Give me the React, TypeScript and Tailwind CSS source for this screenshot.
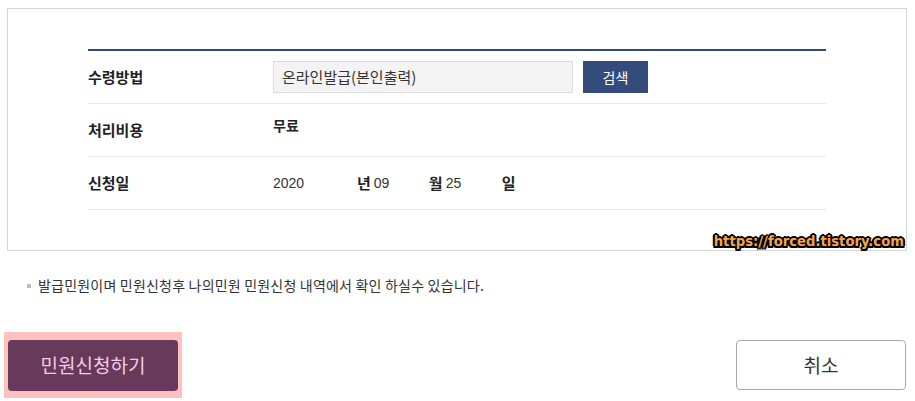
import React from 'react';

const FONT = '"Noto Sans CJK KR", "Liberation Sans", sans-serif';
const NUM = '"Liberation Sans", "Noto Sans CJK KR", sans-serif';

const Row: React.FC<{ label: string; children: React.ReactNode; alignTop?: boolean }> = ({ label, children, alignTop }) => (
  <div className="flex h-[53px] border-b border-[#e8e8e8]">
    <div className="w-[185px] flex items-center text-[15px] font-semibold text-[#222]">{label}</div>
    <div className={`flex-1 flex ${alignTop ? 'items-start pt-[11px]' : 'items-center'}`}>{children}</div>
  </div>
);

export default function App() {
  return (
    <div className="w-[915px] h-[401px] bg-white relative overflow-hidden" style={{ fontFamily: FONT }}>
      {/* Form box */}
      <div className="relative ml-[7px] mt-[8px] w-[900px] h-[243px] border border-[#d6d6d6] pt-[40px] pl-[80px]">
        <div className="w-[738px] border-t-2 border-[#2f4a7a]">
          <Row label="수령방법">
            <div className="w-[300px] h-[32px] bg-[#f3f3f3] border border-[#dcdcdc] flex items-center pl-[8px] text-[15px] text-[#333]">
              온라인발급(본인출력)
            </div>
            <button className="ml-[10px] w-[65px] h-[32px] bg-[#334c7b] text-white text-[14px]">검색</button>
          </Row>
          <Row label="처리비용" alignTop>
            <span className="text-[14px] font-bold text-[#222]">무료</span>
          </Row>
          <Row label="신청일">
            <div className="flex items-center text-[14px] text-[#333]">
              <span className="w-[84px]" style={{ fontFamily: NUM }}>2020</span>
              <span className="text-[15px] font-bold text-[#222] mr-[3px]">년</span>
              <span className="w-[55px]" style={{ fontFamily: NUM }}>09</span>
              <span className="text-[15px] font-bold text-[#222] mr-[3px]">월</span>
              <span className="w-[56px]" style={{ fontFamily: NUM }}>25</span>
              <span className="text-[15px] font-bold text-[#222]">일</span>
            </div>
          </Row>
        </div>
        {/* watermark */}
        <div
          className="absolute right-[2px] bottom-[2px] text-[13.2px] font-bold text-[#f2a54a] leading-none"
          style={{
            fontFamily: '"DejaVu Sans", sans-serif',
            textShadow:
              '-1.5px -1.5px 0 #000, 1.5px -1.5px 0 #000, -1.5px 1.5px 0 #000, 1.5px 1.5px 0 #000, 0 -2px 0 #000, 0 2px 0 #000, -2px 0 0 #000, 2px 0 0 #000',
          }}
        >
          https://forced.tistory.com
        </div>
      </div>

      {/* Notice */}
      <div className="flex items-center mt-[24px] ml-[27px] text-[14px] text-[#333] tracking-[0.2px]">
        <span className="w-[4px] h-[4px] bg-[#bdbdbd] mr-[7px]" />
        <span>발급민원이며 민원신청후 나의민원 민원신청 내역에서 확인 하실수 있습니다.</span>
      </div>

      {/* Buttons */}
      <div className="flex justify-between items-start mt-[36px] pl-[4px] pr-[9px]">
        <div className="bg-[#ffc0c0] p-[4px] pt-[8px] pb-[7px] pr-[4px]">
          <button className="w-[170px] h-[51px] rounded-[4px] bg-[#673a5b] text-[19px] text-[#f2cde0]">민원신청하기</button>
        </div>
        <button className="mt-[8px] w-[170px] h-[50px] rounded-[4px] border border-[#a8a8a8] bg-white text-[19px] text-[#333]">취소</button>
      </div>
    </div>
  );
}
